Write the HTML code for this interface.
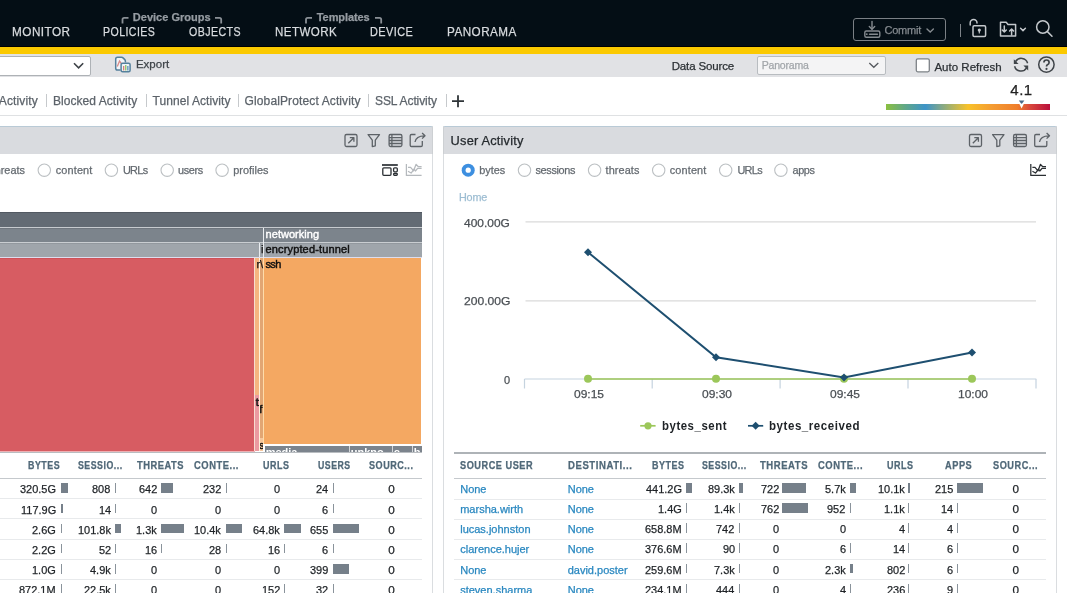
<!DOCTYPE html>
<html><head><meta charset="utf-8"><style>
html,body{margin:0;padding:0;}
body{width:1067px;height:593px;overflow:hidden;position:relative;background:#fff;font-family:"Liberation Sans",sans-serif;}
.t{position:absolute;white-space:nowrap;line-height:1;-webkit-text-stroke:0.25px currentColor;}
#w{position:absolute;left:0;top:0;width:1067px;height:593px;will-change:transform;}
.r{position:absolute;}
svg.r{overflow:visible;}
</style></head><body><div id="w">
<div class="r" style="left:0px;top:0px;width:1067px;height:46px;background:#040e15;"></div>
<div class="r" style="left:0px;top:46px;width:1067px;height:1px;background:#000;"></div>
<div class="r" style="left:0px;top:47px;width:1067px;height:7px;background:#fbc900;"></div>
<div class="t" style="left:12.10px;top:26.00px;font-size:12.6px;color:#d9dcdf;letter-spacing:0.500px;transform:scaleX(0.9338);transform-origin:0 0;">MONITOR</div>
<div class="t" style="left:103.40px;top:26.00px;font-size:12.6px;color:#d9dcdf;letter-spacing:0.500px;transform:scaleX(0.8411);transform-origin:0 0;">POLICIES</div>
<div class="t" style="left:189.40px;top:26.00px;font-size:12.6px;color:#d9dcdf;letter-spacing:0.500px;transform:scaleX(0.8431);transform-origin:0 0;">OBJECTS</div>
<div class="t" style="left:274.70px;top:26.00px;font-size:12.6px;color:#d9dcdf;letter-spacing:0.500px;transform:scaleX(0.9171);transform-origin:0 0;">NETWORK</div>
<div class="t" style="left:370.30px;top:26.00px;font-size:12.6px;color:#d9dcdf;letter-spacing:0.500px;transform:scaleX(0.8649);transform-origin:0 0;">DEVICE</div>
<div class="t" style="left:446.60px;top:26.00px;font-size:12.6px;color:#d9dcdf;letter-spacing:0.500px;transform:scaleX(0.9292);transform-origin:0 0;">PANORAMA</div>
<div class="t" style="left:132.80px;top:12.00px;font-size:11px;color:#969ca2;font-weight:bold;letter-spacing:0.012px;">Device Groups</div>
<div class="t" style="left:316.80px;top:12.00px;font-size:11px;color:#969ca2;font-weight:bold;letter-spacing:-0.084px;">Templates</div>
<svg class="r" style="left:0;top:0" width="1067" height="46"><g fill="none" stroke="#8a9096" stroke-width="1.8"><path d="M122.5 23.5 V19.5 Q122.5 17.8 124.2 17.8 H128.5"/><path d="M215 17.8 H219.5 Q221.2 17.8 221.2 19.5 V23.5"/><path d="M306 23.5 V19.5 Q306 17.8 307.7 17.8 H312"/><path d="M375 17.8 H379.5 Q381.2 17.8 381.2 19.5 V23.5"/></g></svg>
<div class="r" style="left:853px;top:18px;width:90.5px;height:20.5px;border:1.5px solid #7b8085;border-radius:3px;"></div>
<svg class="r" style="left:0;top:0" width="1067" height="46"><g fill="none" stroke="#868b90" stroke-width="1.4" stroke-linecap="round"><path d="M872 21.5 V29"/><path d="M869.3 26.5 L872 29.2 L874.7 26.5"/><rect x="864.8" y="31" width="15" height="6.3" rx="1.5"/><path d="M869.5 34.2 H877.5"/><path d="M927 29 L930.2 32 L933.4 29"/></g><circle cx="866.8" cy="34.2" r="0.9" fill="#868b90"/></svg>
<div class="t" style="left:884.40px;top:25.00px;font-size:11px;color:#868b90;letter-spacing:-0.170px;">Commit</div>
<div class="r" style="left:959.5px;top:23.5px;width:1.5px;height:13px;background:#7e8388;"></div>
<svg class="r" style="left:0;top:0" width="1067" height="46"><g fill="none" stroke="#c4c8cc" stroke-width="1.5" stroke-linecap="round" stroke-linejoin="round"><path d="M970.2 25 V23 A3.4 3.4 0 0 1 977 23"/><rect x="973" y="25.8" width="12.6" height="10.6" rx="1.2"/><path d="M1000.5 36 V22.3 H1006.2 L1008 24.4 H1015.6 V36 Z"/><path d="M1004.3 26 V32 M1002.3 30 L1004.3 32 L1006.3 30"/><path d="M1011.6 35 V29 M1009.6 31 L1011.6 29 L1013.6 31"/><path d="M1020.6 28.3 L1023 30.6 L1025.4 28.3"/><circle cx="1042.8" cy="27" r="6.2"/><path d="M1047.4 31.6 L1052 36.2"/></g><circle cx="979.3" cy="30" r="1.6" fill="#c4c8cc"/><path d="M978.5 30 H980.1 L979.8 33.5 H978.8Z" fill="#c4c8cc"/></svg>
<div class="r" style="left:0px;top:54px;width:1067px;height:23px;background:#e1e2e5;"></div>
<div class="r" style="left:-10px;top:55.5px;width:99px;height:18.5px;background:#fff;border:1px solid #aeb2b6;border-radius:2px;"></div>
<svg class="r" style="left:0;top:0" width="200" height="80"><path d="M74 63.3 L78.6 67.9 L83.2 63.3" fill="none" stroke="#3d4247" stroke-width="1.6"/></svg>
<svg class="r" style="left:0;top:0" width="200" height="80"><path d="M117.5 57.3 H121.5 L125.4 61.2 V70 H117.5 Q115.7 70 115.7 68.2 V59.1 Z" fill="#f2f5f8"/><path d="M117.5 57.3 H121.5 Q122.5 57.3 123.3 58.1 L124.8 59.6 Q125.4 60.2 125.4 61.2 V62.5 M120.6 70 H117.5 Q115.7 70 115.7 68.2 V59.1 Q115.7 57.3 117.5 57.3" fill="none" stroke="#55809c" stroke-width="1.5"/><path d="M117.3 66.5 L119.5 61 L121.3 63.5" fill="none" stroke="#d98a88" stroke-width="1.3"/><rect x="121.1" y="63.2" width="9" height="8.6" rx="1.5" fill="#eef4f8" stroke="#55809c" stroke-width="1.5"/><rect x="123" y="66" width="1.3" height="4.5" fill="#d9817a"/><rect x="125.1" y="65" width="1.3" height="5.5" fill="#93c262"/><rect x="127.2" y="66" width="1.3" height="4.5" fill="#5d94bb"/></svg>
<div class="t" style="left:135.90px;top:59.00px;font-size:11.5px;color:#3e4449;letter-spacing:0.013px;">Export</div>
<div class="t" style="left:671.70px;top:61.00px;font-size:11.5px;color:#2c3135;letter-spacing:-0.144px;">Data Source</div>
<div class="r" style="left:756.5px;top:56.3px;width:127.5px;height:16.5px;background:#f4f4f5;border:1px solid #b8bcc0;border-radius:2px;"></div>
<div class="t" style="left:761.70px;top:60.00px;font-size:10.5px;color:#a2a6aa;letter-spacing:-0.187px;">Panorama</div>
<svg class="r" style="left:0;top:0" width="1067" height="80"><g fill="none" stroke="#55595e" stroke-width="1.3"><path d="M869.3 63 L873.8 67.3 L878.3 63"/></g><rect x="916.3" y="58.8" width="13" height="13" rx="1.5" fill="#fff" stroke="#7d8287" stroke-width="1.3"/><g fill="none" stroke="#3f4449" stroke-width="1.5" stroke-linecap="butt"><path d="M1027.6 63.2 A6.6 6.6 0 0 0 1015.6 61.5"/><path d="M1014.6 66.2 A6.6 6.6 0 0 0 1026.6 67.9"/><circle cx="1046.4" cy="64.6" r="7.7"/></g></svg>
<svg class="r" style="left:0;top:0" width="1067" height="80"><g fill="#3f4449"><path d="M1013.8 59.2 L1013.8 63.9 L1018.6 63.9 Z"/><path d="M1028.2 65.6 L1028.2 70.6 L1023.4 65.6 Z"/></g><path d="M1043.9 62.6 Q1043.9 60 1046.5 60 Q1049.1 60 1049.1 62.4 Q1049.1 63.9 1047.4 64.8 Q1046.5 65.3 1046.5 66.6" fill="none" stroke="#3f4449" stroke-width="1.7"/><circle cx="1046.5" cy="68.9" r="1.05" fill="#3f4449"/></svg>
<div class="t" style="left:934.40px;top:62.00px;font-size:11.5px;color:#2c3135;letter-spacing:0.013px;">Auto Refresh</div>
<div class="t" style="left:-1.20px;top:95.00px;font-size:12px;color:#5c636a;letter-spacing:0.137px;">Activity</div>
<div class="t" style="left:52.90px;top:95.00px;font-size:12px;color:#5c636a;letter-spacing:0.060px;">Blocked Activity</div>
<div class="t" style="left:152.50px;top:95.00px;font-size:12px;color:#5c636a;letter-spacing:0.077px;">Tunnel Activity</div>
<div class="t" style="left:244.60px;top:95.00px;font-size:12px;color:#5c636a;letter-spacing:0.119px;">GlobalProtect Activity</div>
<div class="t" style="left:375.00px;top:95.00px;font-size:12px;color:#5c636a;letter-spacing:-0.089px;">SSL Activity</div>
<div class="r" style="left:46px;top:94px;width:1px;height:13px;background:#c6c9cc;"></div>
<div class="r" style="left:145.7px;top:94px;width:1px;height:13px;background:#c6c9cc;"></div>
<div class="r" style="left:238px;top:94px;width:1px;height:13px;background:#c6c9cc;"></div>
<div class="r" style="left:368.3px;top:94px;width:1px;height:13px;background:#c6c9cc;"></div>
<div class="r" style="left:445.5px;top:94px;width:1px;height:13px;background:#c6c9cc;"></div>
<svg class="r" style="left:0;top:0" width="500" height="120"><path d="M452 101.2 H464 M458 95.2 V107.2" stroke="#2f3438" stroke-width="1.8" fill="none"/></svg>
<div class="t" style="left:1010.30px;top:82.00px;font-size:15px;color:#222;letter-spacing:0.525px;">4.1</div>
<div class="r" style="left:886px;top:103.8px;width:164px;height:6px;background:linear-gradient(to right,#8bc040 0%,#5fa78a 12%,#3d94c8 24%,#9fb070 38%,#f8c22a 50%,#f49b32 65%,#ef7e2b 80%,#d8473c 88%,#b90f3c 100%);"></div>
<svg class="r" style="left:0;top:0" width="1067" height="120"><path d="M1018.8 100.6 H1024.4 L1021.6 104.2 Z" fill="#4a6a88"/><path d="M1019.3 103.8 H1023.9 L1021.6 108.6 Z" fill="#fff"/></svg>
<div class="r" style="left:0px;top:114.5px;width:1067px;height:1px;background:#dfe1e3;"></div>
<div class="r" style="left:-10px;top:126px;width:441px;height:480px;background:#fff;border-right:1px solid #dadde0;border-left:1px solid #dadde0;"></div>
<div class="r" style="left:-10px;top:126px;width:443px;height:27.5px;background:#d9dbdf;border-top:1px solid #b9cad6;border-left:1px solid #cdd0d3;border-right:1px solid #cdd0d3;border-radius:2px 2px 0 0;box-sizing:border-box"></div>
<div class="r" style="left:443px;top:126px;width:612px;height:480px;background:#fff;border-right:1px solid #dadde0;border-left:1px solid #dadde0;"></div>
<div class="r" style="left:443px;top:126px;width:614px;height:27.5px;background:#d9dbdf;border-top:1px solid #b9cad6;border-left:1px solid #cdd0d3;border-right:1px solid #cdd0d3;border-radius:2px 2px 0 0;box-sizing:border-box"></div>
<svg class="r" style="left:0;top:0" width="1067" height="160"><g transform="translate(-624.50,0)" fill="none" stroke="#5d6267" stroke-width="1.3" stroke-linejoin="round"><rect x="969.5" y="134.5" width="12" height="12" rx="1.5"/><path d="M972.8 143.2 L978.3 137.7 M974.3 137.6 H978.4 V141.7"/><path d="M992.6 134.6 H1004 L999.8 140.2 V145.8 L996.8 146.6 V140.2 Z"/><rect x="1013.6" y="134.5" width="12.8" height="12" rx="1.5"/><path d="M1013.6 137.6 H1026.4 M1013.6 140.5 H1026.4 M1013.6 143.5 H1026.4 M1016.4 134.5 V146.5"/><path d="M1040 134.5 H1036 Q1034.7 134.5 1034.7 135.8 V145.2 Q1034.7 146.5 1036 146.5 H1045.5 Q1046.8 146.5 1046.8 145.2 V141"/><path d="M1039.5 142 Q1040.5 135.8 1049 135.8 M1046.6 133 L1049.5 135.8 L1046.6 138.6"/></g></svg>
<svg class="r" style="left:0;top:0" width="1067" height="160"><g transform="translate(0.00,0)" fill="none" stroke="#5d6267" stroke-width="1.3" stroke-linejoin="round"><rect x="969.5" y="134.5" width="12" height="12" rx="1.5"/><path d="M972.8 143.2 L978.3 137.7 M974.3 137.6 H978.4 V141.7"/><path d="M992.6 134.6 H1004 L999.8 140.2 V145.8 L996.8 146.6 V140.2 Z"/><rect x="1013.6" y="134.5" width="12.8" height="12" rx="1.5"/><path d="M1013.6 137.6 H1026.4 M1013.6 140.5 H1026.4 M1013.6 143.5 H1026.4 M1016.4 134.5 V146.5"/><path d="M1040 134.5 H1036 Q1034.7 134.5 1034.7 135.8 V145.2 Q1034.7 146.5 1036 146.5 H1045.5 Q1046.8 146.5 1046.8 145.2 V141"/><path d="M1039.5 142 Q1040.5 135.8 1049 135.8 M1046.6 133 L1049.5 135.8 L1046.6 138.6"/></g></svg>
<div class="t" style="left:450.60px;top:135.00px;font-size:12.8px;color:#24292d;letter-spacing:0.200px;">User Activity</div>
<div class="t" style="left:-8.35px;top:165.00px;font-size:10.9px;color:#646a70;">threats</div>
<svg class="r" style="left:0;top:0" width="1067" height="200"><circle cx="44.3" cy="170.2" r="6.2" fill="#fff" stroke="#bcc0c3" stroke-width="1.1"/></svg>
<div class="t" style="left:55.70px;top:165.00px;font-size:10.9px;color:#646a70;letter-spacing:0.158px;">content</div>
<svg class="r" style="left:0;top:0" width="1067" height="200"><circle cx="111.39999999999999" cy="170.2" r="6.2" fill="#fff" stroke="#bcc0c3" stroke-width="1.1"/></svg>
<div class="t" style="left:122.90px;top:165.00px;font-size:10.9px;color:#646a70;letter-spacing:-0.683px;">URLs</div>
<svg class="r" style="left:0;top:0" width="1067" height="200"><circle cx="167.20000000000002" cy="170.2" r="6.2" fill="#fff" stroke="#bcc0c3" stroke-width="1.1"/></svg>
<div class="t" style="left:178.00px;top:165.00px;font-size:10.9px;color:#646a70;letter-spacing:-0.351px;">users</div>
<svg class="r" style="left:0;top:0" width="1067" height="200"><circle cx="222.10000000000002" cy="170.2" r="6.2" fill="#fff" stroke="#bcc0c3" stroke-width="1.1"/></svg>
<div class="t" style="left:233.20px;top:165.00px;font-size:10.9px;color:#646a70;letter-spacing:0.029px;">profiles</div>
<svg class="r" style="left:0;top:0" width="1067" height="200"><circle cx="468.2" cy="170.2" r="6.5" fill="#3d8fe0"/><circle cx="468.2" cy="170.2" r="2.6" fill="#fff"/></svg>
<div class="t" style="left:479.20px;top:165.00px;font-size:10.9px;color:#646a70;letter-spacing:-0.013px;">bytes</div>
<svg class="r" style="left:0;top:0" width="1067" height="200"><circle cx="524.5" cy="170.2" r="6.2" fill="#fff" stroke="#bcc0c3" stroke-width="1.1"/></svg>
<div class="t" style="left:535.50px;top:165.00px;font-size:10.9px;color:#646a70;letter-spacing:-0.357px;">sessions</div>
<svg class="r" style="left:0;top:0" width="1067" height="200"><circle cx="594.5999999999999" cy="170.2" r="6.2" fill="#fff" stroke="#bcc0c3" stroke-width="1.1"/></svg>
<div class="t" style="left:605.60px;top:165.00px;font-size:10.9px;color:#646a70;letter-spacing:0.091px;">threats</div>
<svg class="r" style="left:0;top:0" width="1067" height="200"><circle cx="658.6999999999999" cy="170.2" r="6.2" fill="#fff" stroke="#bcc0c3" stroke-width="1.1"/></svg>
<div class="t" style="left:669.70px;top:165.00px;font-size:10.9px;color:#646a70;letter-spacing:0.158px;">content</div>
<svg class="r" style="left:0;top:0" width="1067" height="200"><circle cx="725.6999999999999" cy="170.2" r="6.2" fill="#fff" stroke="#bcc0c3" stroke-width="1.1"/></svg>
<div class="t" style="left:737.40px;top:165.00px;font-size:10.9px;color:#646a70;letter-spacing:-0.650px;">URLs</div>
<svg class="r" style="left:0;top:0" width="1067" height="200"><circle cx="780.9" cy="170.2" r="6.2" fill="#fff" stroke="#bcc0c3" stroke-width="1.1"/></svg>
<div class="t" style="left:792.60px;top:165.00px;font-size:10.9px;color:#646a70;letter-spacing:-0.418px;">apps</div>
<svg class="r" style="left:0;top:0" width="1067" height="200"><g transform="translate(0.00,0)" fill="none" stroke="#2a2e32" stroke-width="1.25" stroke-linejoin="round"><path d="M1030.8 164 V175.4 H1046"/><path d="M1032.4 167.3 H1035 L1038 170.8 L1040.5 164.3 L1042.5 166.5 H1046"/><path d="M1032.4 171.3 L1035.5 173 L1038.5 169 L1039.8 171 L1042 168.3 H1046"/></g></svg>
<svg class="r" style="left:0;top:0" width="1067" height="200"><g transform="translate(-624.40,0)" fill="none" stroke="#b5b9bd" stroke-width="1.25" stroke-linejoin="round"><path d="M1030.8 164 V175.4 H1046"/><path d="M1032.4 167.3 H1035 L1038 170.8 L1040.5 164.3 L1042.5 166.5 H1046"/><path d="M1032.4 171.3 L1035.5 173 L1038.5 169 L1039.8 171 L1042 168.3 H1046"/></g></svg>
<svg class="r" style="left:0;top:0" width="500" height="200"><g fill="none" stroke="#2a2f33" stroke-width="1.3"><path d="M382 165 H397.8" stroke-width="1.7"/><rect x="382.8" y="167.8" width="8.2" height="7.5" rx="1"/><rect x="393.6" y="167.8" width="3.7" height="4" rx="1"/><rect x="393.6" y="173.5" width="3.7" height="1.8" rx="0.8"/></g></svg>
<div class="r" style="left:0px;top:212px;width:421.5px;height:15px;background:#636b74;"></div>
<div class="r" style="left:0px;top:227px;width:421.5px;height:1px;background:#c7cbcf;"></div>
<div class="r" style="left:0px;top:228px;width:421.5px;height:14.2px;background:#7c848c;"></div>
<div class="r" style="left:0px;top:242.2px;width:421.5px;height:1.2px;background:#c9cdd1;"></div>
<div class="r" style="left:0px;top:243.4px;width:421.5px;height:13.9px;background:#9fa5ab;"></div>
<div class="r" style="left:0px;top:257.3px;width:421.5px;height:0.5px;background:#dde;"></div>
<div class="r" style="left:0px;top:257.8px;width:254.4px;height:193.2px;background:#d75c62;"></div>
<div class="r" style="left:0px;top:212px;width:421.5px;height:1px;background:#525962;"></div>
<div class="r" style="left:0px;top:228px;width:421.5px;height:0.8px;background:#6f767e;"></div>
<div class="r" style="left:0px;top:243.4px;width:421.5px;height:0.8px;background:#92989e;"></div>
<div class="r" style="left:0px;top:257.8px;width:254.4px;height:0.8px;background:#cd5158;"></div>
<div class="r" style="left:0px;top:451px;width:254.6px;height:1px;background:#eeb0b3;"></div>
<div class="r" style="left:0px;top:452px;width:421.7px;height:1px;background:#b9bdc1;"></div>
<div class="r" style="left:254.4px;top:257.8px;width:167.1px;height:186.2px;background:#f4a862;"></div>
<div class="r" style="left:264.5px;top:446.2px;width:157px;height:5.8px;background:#7c848d;"></div>
<div class="r" style="left:264.5px;top:444px;width:157px;height:2.2px;background:#fff;"></div>
<div class="r" style="left:254.4px;top:257.8px;width:1px;height:193.2px;background:#f8dcd0;"></div>
<div class="r" style="left:255.4px;top:257.8px;width:3.2px;height:137.2px;background:#f5b580;"></div>
<div class="r" style="left:255.4px;top:395px;width:3.2px;height:56px;background:#eb9aa0;"></div>
<div class="r" style="left:258.6px;top:257.8px;width:1px;height:193.2px;background:#fff3dc;"></div>
<div class="r" style="left:259.6px;top:257.8px;width:3.2px;height:180.2px;background:#e2a673;"></div>
<div class="r" style="left:259.6px;top:438px;width:3.4px;height:13px;background:#f6c79c;"></div>
<div class="r" style="left:262.8px;top:257.8px;width:1.7px;height:186.2px;background:#fedcaa;"></div>
<div class="r" style="left:255.4px;top:395px;width:3.2px;height:56px;overflow:hidden"><div class="t" style="left:0.3px;top:2px;font-size:11px;color:#111;-webkit-text-stroke:0.5px #111">t</div></div>
<div class="r" style="left:259.6px;top:400px;width:3.2px;height:38px;overflow:hidden"><div class="t" style="left:-0.3px;top:3.5px;font-size:11px;color:#111;-webkit-text-stroke:0.5px #111">f</div></div>
<div class="r" style="left:259.6px;top:438px;width:3.4px;height:13px;overflow:hidden"><div class="t" style="left:-0.5px;top:2px;font-size:11px;color:#111;-webkit-text-stroke:0.5px #111">s</div></div>
<div class="r" style="left:263.3px;top:228px;width:1px;height:29.5px;background:#e9ecef;"></div>
<div class="r" style="left:258.8px;top:243.4px;width:1px;height:14px;background:#e9ecef;"></div>
<div class="r" style="left:349.1px;top:446px;width:1px;height:6px;background:#d3d6d9;"></div>
<div class="r" style="left:392.4px;top:446px;width:1px;height:6px;background:#d3d6d9;"></div>
<div class="r" style="left:412.1px;top:446px;width:1px;height:6px;background:#d3d6d9;"></div>
<div class="r" style="left:263.7px;top:446.2px;width:157.8px;height:5.8px;overflow:hidden"><div class="t" style="left:2px;top:1px;font-size:11px;color:#fff;font-weight:bold;-webkit-text-stroke:0">media</div><div class="t" style="left:87px;top:1px;font-size:11px;color:#fff;font-weight:bold;-webkit-text-stroke:0">unkno</div><div class="t" style="left:130px;top:1px;font-size:11px;color:#fff;font-weight:bold;-webkit-text-stroke:0">c</div><div class="t" style="left:150px;top:1px;font-size:11px;color:#fff;font-weight:bold;-webkit-text-stroke:0">b</div></div>
<div class="t" style="left:265.60px;top:229.00px;font-size:11px;color:#ffffff;letter-spacing:0.029px;-webkit-text-stroke:0.4px #fff;">networking</div>
<div class="t" style="left:261.00px;top:244.00px;font-size:11px;color:#111;">i</div>
<div class="t" style="left:265.60px;top:244.00px;font-size:11px;color:#111;letter-spacing:0.137px;-webkit-text-stroke:0.45px #111;">encrypted-tunnel</div>
<div class="t" style="left:256.40px;top:259.00px;font-size:11px;color:#111;">r\</div>
<div class="t" style="left:265.40px;top:259.00px;font-size:11px;color:#111;letter-spacing:-0.580px;-webkit-text-stroke:0.45px #111;">ssh</div>
<svg class="r" style="left:0;top:0" width="1067" height="593"><g stroke="#dadada" stroke-width="1.2"><path d="M525.5 221.8 H1036"/><path d="M525.5 300.8 H1036"/></g><g stroke="#c5d3df" stroke-width="1.2" fill="none"><path d="M524.5 379 H1036.3"/><path d="M524.5 379 V388.5 M652.2 379 V388.5 M780.1 379 V388.5 M908 379 V388.5 M1036 379 V388.5"/></g><path d="M588 379 H972" stroke="#9cc75a" stroke-width="1.6"/><g fill="#9cc75a"><circle cx="588" cy="378.8" r="4"/><circle cx="716" cy="378.8" r="4"/><circle cx="844" cy="378.8" r="4"/><circle cx="972" cy="378.8" r="4"/></g><path d="M588 252.2 L716 357.2 L844 377.4 L972 352.4" fill="none" stroke="#1e4f70" stroke-width="2"/><g fill="#1e4f70"><path d="M588 248.2 L592 252.2 L588 256.2 L584 252.2 Z"/><path d="M716 353.2 L720 357.2 L716 361.2 L712 357.2 Z"/><path d="M844 373.4 L848 377.4 L844 381.4 L840 377.4 Z"/><path d="M972 348.4 L976 352.4 L972 356.4 L968 352.4 Z"/></g><path d="M640.2 425.8 H655.6" stroke="#9cc75a" stroke-width="1.7"/><circle cx="648" cy="425.8" r="3.6" fill="#9cc75a"/><path d="M748 425.8 H763.2" stroke="#1e4f70" stroke-width="1.7"/><path d="M755.6 421.8 L759.6 425.8 L755.6 429.8 L751.6 425.8Z" fill="#1e4f70"/></svg>
<div class="t" style="left:464.10px;top:218.00px;font-size:11.8px;color:#4a4f54;transform:scaleX(1.0130);transform-origin:0 0;">400.00G</div>
<div class="t" style="left:463.50px;top:296.00px;font-size:11.8px;color:#4a4f54;transform:scaleX(1.0262);transform-origin:0 0;">200.00G</div>
<div class="t" style="left:503.55px;top:375.00px;font-size:11.8px;color:#4a4f54;transform:scaleX(0.9300);transform-origin:0 0;">0</div>
<div class="t" style="left:574.00px;top:389.00px;font-size:11.5px;color:#4a4f54;transform:scaleX(1.0435);transform-origin:0 0;">09:15</div>
<div class="t" style="left:702.00px;top:389.00px;font-size:11.5px;color:#4a4f54;transform:scaleX(1.0435);transform-origin:0 0;">09:30</div>
<div class="t" style="left:830.00px;top:389.00px;font-size:11.5px;color:#4a4f54;transform:scaleX(1.0435);transform-origin:0 0;">09:45</div>
<div class="t" style="left:958.00px;top:389.00px;font-size:11.5px;color:#4a4f54;transform:scaleX(1.0435);transform-origin:0 0;">10:00</div>
<div class="t" style="left:661.60px;top:420.00px;font-size:12.5px;color:#1e2226;font-weight:bold;letter-spacing:0.600px;transform:scaleX(0.9115);transform-origin:0 0;-webkit-text-stroke:0;">bytes_sent</div>
<div class="t" style="left:768.80px;top:420.00px;font-size:12.5px;color:#1e2226;font-weight:bold;letter-spacing:0.600px;transform:scaleX(0.9218);transform-origin:0 0;-webkit-text-stroke:0;">bytes_received</div>
<div class="t" style="left:458.90px;top:192.00px;font-size:10.8px;color:#9dbdd2;letter-spacing:-0.112px;">Home</div>
<div class="r" style="left:0px;top:478px;width:421.7px;height:1px;background:#c5c9cd;"></div>
<div class="r" style="left:0px;top:498.3px;width:421.7px;height:1px;background:#e8eaec;"></div>
<div class="r" style="left:0px;top:518.3px;width:421.7px;height:1px;background:#e8eaec;"></div>
<div class="r" style="left:0px;top:538.6px;width:421.7px;height:1px;background:#e8eaec;"></div>
<div class="r" style="left:0px;top:558.9px;width:421.7px;height:1px;background:#e8eaec;"></div>
<div class="r" style="left:0px;top:579.1px;width:421.7px;height:1px;background:#e8eaec;"></div>
<div class="t" style="left:27.80px;top:461.00px;font-size:10.3px;color:#506878;font-weight:bold;letter-spacing:0.600px;transform:scaleX(0.8611);transform-origin:0 0;">BYTES</div>
<div class="t" style="left:77.90px;top:461.00px;font-size:10.3px;color:#506878;font-weight:bold;letter-spacing:0.600px;transform:scaleX(0.8519);transform-origin:0 0;">SESSIO...</div>
<div class="t" style="left:136.50px;top:461.00px;font-size:10.3px;color:#506878;font-weight:bold;letter-spacing:0.600px;transform:scaleX(0.9049);transform-origin:0 0;">THREATS</div>
<div class="t" style="left:194.10px;top:461.00px;font-size:10.3px;color:#506878;font-weight:bold;letter-spacing:0.600px;transform:scaleX(0.9099);transform-origin:0 0;">CONTE...</div>
<div class="t" style="left:263.30px;top:461.00px;font-size:10.3px;color:#506878;font-weight:bold;letter-spacing:0.600px;transform:scaleX(0.8687);transform-origin:0 0;">URLS</div>
<div class="t" style="left:318.40px;top:461.00px;font-size:10.3px;color:#506878;font-weight:bold;letter-spacing:0.600px;transform:scaleX(0.8488);transform-origin:0 0;">USERS</div>
<div class="t" style="left:368.80px;top:461.00px;font-size:10.3px;color:#506878;font-weight:bold;letter-spacing:0.600px;transform:scaleX(0.8792);transform-origin:0 0;">SOURC...</div>
<div class="t" style="left:20.11px;top:484.00px;font-size:11.8px;color:#1e2226;transform:scaleX(0.9300);transform-origin:0 0;">320.5G</div>
<div class="r" style="left:60.8px;top:483.3px;width:7px;height:9.6px;background:#76808a;"></div>
<div class="t" style="left:92.47px;top:484.00px;font-size:11.8px;color:#1e2226;transform:scaleX(0.9300);transform-origin:0 0;">808</div>
<div class="r" style="left:114.8px;top:483.3px;width:1.2px;height:9.6px;background:#8a939b;"></div>
<div class="t" style="left:138.77px;top:484.00px;font-size:11.8px;color:#1e2226;transform:scaleX(0.9300);transform-origin:0 0;">642</div>
<div class="r" style="left:161.2px;top:483.3px;width:12px;height:9.6px;background:#76808a;"></div>
<div class="t" style="left:203.07px;top:484.00px;font-size:11.8px;color:#1e2226;transform:scaleX(0.9300);transform-origin:0 0;">232</div>
<div class="r" style="left:225.5px;top:483.3px;width:1.2px;height:9.6px;background:#8a939b;"></div>
<div class="t" style="left:273.85px;top:484.00px;font-size:11.8px;color:#1e2226;transform:scaleX(0.9300);transform-origin:0 0;">0</div>
<div class="t" style="left:316.42px;top:484.00px;font-size:11.8px;color:#1e2226;transform:scaleX(0.9300);transform-origin:0 0;">24</div>
<div class="r" style="left:333px;top:483.3px;width:1.2px;height:9.6px;background:#8a939b;"></div>
<div class="t" style="left:388.22px;top:483.00px;font-size:11.7px;color:#1e2226;">0</div>
<div class="t" style="left:20.87px;top:505.00px;font-size:11.8px;color:#1e2226;transform:scaleX(0.9300);transform-origin:0 0;">117.9G</div>
<div class="r" style="left:60.8px;top:503.5px;width:2.4px;height:9.6px;background:#76808a;"></div>
<div class="t" style="left:98.62px;top:505.00px;font-size:11.8px;color:#1e2226;transform:scaleX(0.9300);transform-origin:0 0;">14</div>
<div class="r" style="left:114.8px;top:503.5px;width:1.2px;height:9.6px;background:#8a939b;"></div>
<div class="t" style="left:150.95px;top:505.00px;font-size:11.8px;color:#1e2226;transform:scaleX(0.9300);transform-origin:0 0;">0</div>
<div class="t" style="left:215.25px;top:505.00px;font-size:11.8px;color:#1e2226;transform:scaleX(0.9300);transform-origin:0 0;">0</div>
<div class="t" style="left:273.85px;top:505.00px;font-size:11.8px;color:#1e2226;transform:scaleX(0.9300);transform-origin:0 0;">0</div>
<div class="t" style="left:322.45px;top:505.00px;font-size:11.8px;color:#1e2226;transform:scaleX(0.9300);transform-origin:0 0;">6</div>
<div class="r" style="left:333px;top:503.5px;width:1.2px;height:9.6px;background:#8a939b;"></div>
<div class="t" style="left:388.22px;top:504.00px;font-size:11.7px;color:#1e2226;">0</div>
<div class="t" style="left:32.29px;top:525.00px;font-size:11.8px;color:#1e2226;transform:scaleX(0.9300);transform-origin:0 0;">2.6G</div>
<div class="r" style="left:60.8px;top:523.7px;width:1.2px;height:9.6px;background:#8a939b;"></div>
<div class="t" style="left:77.77px;top:525.00px;font-size:11.8px;color:#1e2226;transform:scaleX(0.9300);transform-origin:0 0;">101.8k</div>
<div class="r" style="left:114.8px;top:523.7px;width:6px;height:9.6px;background:#76808a;"></div>
<div class="t" style="left:136.25px;top:525.00px;font-size:11.8px;color:#1e2226;transform:scaleX(0.9300);transform-origin:0 0;">1.3k</div>
<div class="r" style="left:161.2px;top:523.7px;width:23px;height:9.6px;background:#76808a;"></div>
<div class="t" style="left:194.40px;top:525.00px;font-size:11.8px;color:#1e2226;transform:scaleX(0.9300);transform-origin:0 0;">10.4k</div>
<div class="r" style="left:225.5px;top:523.7px;width:16.5px;height:9.6px;background:#76808a;"></div>
<div class="t" style="left:253.00px;top:525.00px;font-size:11.8px;color:#1e2226;transform:scaleX(0.9300);transform-origin:0 0;">64.8k</div>
<div class="r" style="left:284px;top:523.7px;width:16.5px;height:9.6px;background:#76808a;"></div>
<div class="t" style="left:310.27px;top:525.00px;font-size:11.8px;color:#1e2226;transform:scaleX(0.9300);transform-origin:0 0;">655</div>
<div class="r" style="left:333px;top:523.7px;width:25.6px;height:9.6px;background:#76808a;"></div>
<div class="t" style="left:388.22px;top:524.00px;font-size:11.7px;color:#1e2226;">0</div>
<div class="t" style="left:32.29px;top:545.00px;font-size:11.8px;color:#1e2226;transform:scaleX(0.9300);transform-origin:0 0;">2.2G</div>
<div class="r" style="left:60.8px;top:543.9px;width:1.2px;height:9.6px;background:#8a939b;"></div>
<div class="t" style="left:98.62px;top:545.00px;font-size:11.8px;color:#1e2226;transform:scaleX(0.9300);transform-origin:0 0;">52</div>
<div class="r" style="left:114.8px;top:543.9px;width:1.2px;height:9.6px;background:#8a939b;"></div>
<div class="t" style="left:144.92px;top:545.00px;font-size:11.8px;color:#1e2226;transform:scaleX(0.9300);transform-origin:0 0;">16</div>
<div class="r" style="left:161.2px;top:543.9px;width:1.2px;height:9.6px;background:#8a939b;"></div>
<div class="t" style="left:209.22px;top:545.00px;font-size:11.8px;color:#1e2226;transform:scaleX(0.9300);transform-origin:0 0;">28</div>
<div class="r" style="left:225.5px;top:543.9px;width:1.2px;height:9.6px;background:#8a939b;"></div>
<div class="t" style="left:267.82px;top:545.00px;font-size:11.8px;color:#1e2226;transform:scaleX(0.9300);transform-origin:0 0;">16</div>
<div class="r" style="left:284px;top:543.9px;width:1.2px;height:9.6px;background:#8a939b;"></div>
<div class="t" style="left:322.45px;top:545.00px;font-size:11.8px;color:#1e2226;transform:scaleX(0.9300);transform-origin:0 0;">6</div>
<div class="r" style="left:333px;top:543.9px;width:1.2px;height:9.6px;background:#8a939b;"></div>
<div class="t" style="left:388.22px;top:544.00px;font-size:11.7px;color:#1e2226;">0</div>
<div class="t" style="left:32.29px;top:565.00px;font-size:11.8px;color:#1e2226;transform:scaleX(0.9300);transform-origin:0 0;">1.0G</div>
<div class="r" style="left:60.8px;top:564.1px;width:1.2px;height:9.6px;background:#8a939b;"></div>
<div class="t" style="left:89.95px;top:565.00px;font-size:11.8px;color:#1e2226;transform:scaleX(0.9300);transform-origin:0 0;">4.9k</div>
<div class="r" style="left:114.8px;top:564.1px;width:1.2px;height:9.6px;background:#8a939b;"></div>
<div class="t" style="left:150.95px;top:565.00px;font-size:11.8px;color:#1e2226;transform:scaleX(0.9300);transform-origin:0 0;">0</div>
<div class="t" style="left:215.25px;top:565.00px;font-size:11.8px;color:#1e2226;transform:scaleX(0.9300);transform-origin:0 0;">0</div>
<div class="t" style="left:273.85px;top:565.00px;font-size:11.8px;color:#1e2226;transform:scaleX(0.9300);transform-origin:0 0;">0</div>
<div class="t" style="left:310.27px;top:565.00px;font-size:11.8px;color:#1e2226;transform:scaleX(0.9300);transform-origin:0 0;">399</div>
<div class="r" style="left:333px;top:564.1px;width:15.6px;height:9.6px;background:#76808a;"></div>
<div class="t" style="left:388.22px;top:564.00px;font-size:11.7px;color:#1e2226;">0</div>
<div class="t" style="left:19.45px;top:585.00px;font-size:11.8px;color:#1e2226;transform:scaleX(0.9300);transform-origin:0 0;">872.1M</div>
<div class="r" style="left:60.8px;top:584.3px;width:1.2px;height:9.6px;background:#8a939b;"></div>
<div class="t" style="left:83.80px;top:585.00px;font-size:11.8px;color:#1e2226;transform:scaleX(0.9300);transform-origin:0 0;">22.5k</div>
<div class="r" style="left:114.8px;top:584.3px;width:1.2px;height:9.6px;background:#8a939b;"></div>
<div class="t" style="left:150.95px;top:585.00px;font-size:11.8px;color:#1e2226;transform:scaleX(0.9300);transform-origin:0 0;">0</div>
<div class="t" style="left:215.25px;top:585.00px;font-size:11.8px;color:#1e2226;transform:scaleX(0.9300);transform-origin:0 0;">0</div>
<div class="t" style="left:261.67px;top:585.00px;font-size:11.8px;color:#1e2226;transform:scaleX(0.9300);transform-origin:0 0;">152</div>
<div class="r" style="left:284px;top:584.3px;width:1.2px;height:9.6px;background:#8a939b;"></div>
<div class="t" style="left:316.42px;top:585.00px;font-size:11.8px;color:#1e2226;transform:scaleX(0.9300);transform-origin:0 0;">32</div>
<div class="r" style="left:333px;top:584.3px;width:1.2px;height:9.6px;background:#8a939b;"></div>
<div class="t" style="left:388.22px;top:584.00px;font-size:11.7px;color:#1e2226;">0</div>
<div class="r" style="left:453.5px;top:451.8px;width:592.5px;height:1.8px;background:#aeb3b7;"></div>
<div class="r" style="left:453.5px;top:478px;width:592.5px;height:1px;background:#c5c9cd;"></div>
<div class="r" style="left:453.5px;top:498.5px;width:592.5px;height:1px;background:#e8eaec;"></div>
<div class="r" style="left:453.5px;top:518.5px;width:592.5px;height:1px;background:#e8eaec;"></div>
<div class="r" style="left:453.5px;top:538.8px;width:592.5px;height:1px;background:#e8eaec;"></div>
<div class="r" style="left:453.5px;top:559.1px;width:592.5px;height:1px;background:#e8eaec;"></div>
<div class="r" style="left:453.5px;top:579.2px;width:592.5px;height:1px;background:#e8eaec;"></div>
<div class="t" style="left:460.20px;top:461.00px;font-size:10.3px;color:#506878;font-weight:bold;letter-spacing:0.600px;transform:scaleX(0.8908);transform-origin:0 0;">SOURCE USER</div>
<div class="t" style="left:567.70px;top:461.00px;font-size:10.3px;color:#506878;font-weight:bold;letter-spacing:0.600px;transform:scaleX(0.9286);transform-origin:0 0;">DESTINATI...</div>
<div class="t" style="left:651.90px;top:461.00px;font-size:10.3px;color:#506878;font-weight:bold;letter-spacing:0.600px;transform:scaleX(0.8720);transform-origin:0 0;">BYTES</div>
<div class="t" style="left:702.20px;top:461.00px;font-size:10.3px;color:#506878;font-weight:bold;letter-spacing:0.600px;transform:scaleX(0.8519);transform-origin:0 0;">SESSIO...</div>
<div class="t" style="left:759.90px;top:461.00px;font-size:10.3px;color:#506878;font-weight:bold;letter-spacing:0.600px;transform:scaleX(0.9224);transform-origin:0 0;">THREATS</div>
<div class="t" style="left:818.10px;top:461.00px;font-size:10.3px;color:#506878;font-weight:bold;letter-spacing:0.600px;transform:scaleX(0.9119);transform-origin:0 0;">CONTE...</div>
<div class="t" style="left:887.10px;top:461.00px;font-size:10.3px;color:#506878;font-weight:bold;letter-spacing:0.600px;transform:scaleX(0.8754);transform-origin:0 0;">URLS</div>
<div class="t" style="left:945.30px;top:461.00px;font-size:10.3px;color:#506878;font-weight:bold;letter-spacing:0.600px;transform:scaleX(0.8955);transform-origin:0 0;">APPS</div>
<div class="t" style="left:992.80px;top:461.00px;font-size:10.3px;color:#506878;font-weight:bold;letter-spacing:0.600px;transform:scaleX(0.8912);transform-origin:0 0;">SOURC...</div>
<div class="t" style="left:460.20px;top:484.00px;font-size:11px;color:#2a88c0;">None</div>
<div class="t" style="left:567.70px;top:484.00px;font-size:11px;color:#2a88c0;">None</div>
<div class="t" style="left:645.51px;top:484.00px;font-size:11.8px;color:#1e2226;transform:scaleX(0.9300);transform-origin:0 0;">441.2G</div>
<div class="r" style="left:686px;top:483.0px;width:5.8px;height:9.6px;background:#76808a;"></div>
<div class="t" style="left:707.70px;top:484.00px;font-size:11.8px;color:#1e2226;transform:scaleX(0.9300);transform-origin:0 0;">89.3k</div>
<div class="r" style="left:739px;top:483.0px;width:4px;height:9.6px;background:#76808a;"></div>
<div class="t" style="left:760.87px;top:484.00px;font-size:11.8px;color:#1e2226;transform:scaleX(0.9300);transform-origin:0 0;">722</div>
<div class="r" style="left:782.3px;top:483.0px;width:23.6px;height:9.6px;background:#76808a;"></div>
<div class="t" style="left:824.85px;top:484.00px;font-size:11.8px;color:#1e2226;transform:scaleX(0.9300);transform-origin:0 0;">5.7k</div>
<div class="r" style="left:849.7px;top:483.0px;width:6.8px;height:9.6px;background:#76808a;"></div>
<div class="t" style="left:877.90px;top:484.00px;font-size:11.8px;color:#1e2226;transform:scaleX(0.9300);transform-origin:0 0;">10.1k</div>
<div class="r" style="left:908px;top:483.0px;width:2.4px;height:9.6px;background:#76808a;"></div>
<div class="t" style="left:935.27px;top:484.00px;font-size:11.8px;color:#1e2226;transform:scaleX(0.9300);transform-origin:0 0;">215</div>
<div class="r" style="left:957px;top:483.0px;width:25.7px;height:9.6px;background:#76808a;"></div>
<div class="t" style="left:1012.52px;top:483.00px;font-size:11.7px;color:#1e2226;">0</div>
<div class="t" style="left:460.20px;top:504.00px;font-size:11px;color:#2a88c0;">marsha.wirth</div>
<div class="t" style="left:567.70px;top:504.00px;font-size:11px;color:#2a88c0;">None</div>
<div class="t" style="left:657.69px;top:504.00px;font-size:11.8px;color:#1e2226;transform:scaleX(0.9300);transform-origin:0 0;">1.4G</div>
<div class="r" style="left:686px;top:503.15px;width:1.2px;height:9.6px;background:#8a939b;"></div>
<div class="t" style="left:713.85px;top:504.00px;font-size:11.8px;color:#1e2226;transform:scaleX(0.9300);transform-origin:0 0;">1.4k</div>
<div class="r" style="left:739px;top:503.15px;width:1.2px;height:9.6px;background:#8a939b;"></div>
<div class="t" style="left:760.87px;top:504.00px;font-size:11.8px;color:#1e2226;transform:scaleX(0.9300);transform-origin:0 0;">762</div>
<div class="r" style="left:782.3px;top:503.15px;width:25.7px;height:9.6px;background:#76808a;"></div>
<div class="t" style="left:827.37px;top:504.00px;font-size:11.8px;color:#1e2226;transform:scaleX(0.9300);transform-origin:0 0;">952</div>
<div class="r" style="left:849.7px;top:503.15px;width:1.2px;height:9.6px;background:#8a939b;"></div>
<div class="t" style="left:884.05px;top:504.00px;font-size:11.8px;color:#1e2226;transform:scaleX(0.9300);transform-origin:0 0;">1.1k</div>
<div class="r" style="left:908px;top:503.15px;width:1.2px;height:9.6px;background:#8a939b;"></div>
<div class="t" style="left:941.42px;top:504.00px;font-size:11.8px;color:#1e2226;transform:scaleX(0.9300);transform-origin:0 0;">14</div>
<div class="r" style="left:957px;top:503.15px;width:1.2px;height:9.6px;background:#8a939b;"></div>
<div class="t" style="left:1012.52px;top:503.00px;font-size:11.7px;color:#1e2226;">0</div>
<div class="t" style="left:460.20px;top:524.00px;font-size:11px;color:#2a88c0;">lucas.johnston</div>
<div class="t" style="left:567.70px;top:524.00px;font-size:11px;color:#2a88c0;">None</div>
<div class="t" style="left:644.85px;top:524.00px;font-size:11.8px;color:#1e2226;transform:scaleX(0.9300);transform-origin:0 0;">658.8M</div>
<div class="r" style="left:686px;top:523.3px;width:1.2px;height:9.6px;background:#8a939b;"></div>
<div class="t" style="left:716.37px;top:524.00px;font-size:11.8px;color:#1e2226;transform:scaleX(0.9300);transform-origin:0 0;">742</div>
<div class="r" style="left:739px;top:523.3px;width:1.2px;height:9.6px;background:#8a939b;"></div>
<div class="t" style="left:773.05px;top:524.00px;font-size:11.8px;color:#1e2226;transform:scaleX(0.9300);transform-origin:0 0;">0</div>
<div class="t" style="left:839.55px;top:524.00px;font-size:11.8px;color:#1e2226;transform:scaleX(0.9300);transform-origin:0 0;">0</div>
<div class="t" style="left:898.75px;top:524.00px;font-size:11.8px;color:#1e2226;transform:scaleX(0.9300);transform-origin:0 0;">4</div>
<div class="r" style="left:908px;top:523.3px;width:1.2px;height:9.6px;background:#8a939b;"></div>
<div class="t" style="left:947.45px;top:524.00px;font-size:11.8px;color:#1e2226;transform:scaleX(0.9300);transform-origin:0 0;">4</div>
<div class="r" style="left:957px;top:523.3px;width:1.2px;height:9.6px;background:#8a939b;"></div>
<div class="t" style="left:1012.52px;top:523.00px;font-size:11.7px;color:#1e2226;">0</div>
<div class="t" style="left:460.20px;top:544.00px;font-size:11px;color:#2a88c0;">clarence.hujer</div>
<div class="t" style="left:567.70px;top:544.00px;font-size:11px;color:#2a88c0;">None</div>
<div class="t" style="left:644.85px;top:544.00px;font-size:11.8px;color:#1e2226;transform:scaleX(0.9300);transform-origin:0 0;">376.6M</div>
<div class="r" style="left:686px;top:543.45px;width:1.2px;height:9.6px;background:#8a939b;"></div>
<div class="t" style="left:722.52px;top:544.00px;font-size:11.8px;color:#1e2226;transform:scaleX(0.9300);transform-origin:0 0;">90</div>
<div class="r" style="left:739px;top:543.45px;width:1.2px;height:9.6px;background:#8a939b;"></div>
<div class="t" style="left:773.05px;top:544.00px;font-size:11.8px;color:#1e2226;transform:scaleX(0.9300);transform-origin:0 0;">0</div>
<div class="t" style="left:839.55px;top:544.00px;font-size:11.8px;color:#1e2226;transform:scaleX(0.9300);transform-origin:0 0;">6</div>
<div class="r" style="left:849.7px;top:543.45px;width:1.2px;height:9.6px;background:#8a939b;"></div>
<div class="t" style="left:892.72px;top:544.00px;font-size:11.8px;color:#1e2226;transform:scaleX(0.9300);transform-origin:0 0;">14</div>
<div class="r" style="left:908px;top:543.45px;width:1.2px;height:9.6px;background:#8a939b;"></div>
<div class="t" style="left:947.45px;top:544.00px;font-size:11.8px;color:#1e2226;transform:scaleX(0.9300);transform-origin:0 0;">6</div>
<div class="r" style="left:957px;top:543.45px;width:1.2px;height:9.6px;background:#8a939b;"></div>
<div class="t" style="left:1012.52px;top:543.00px;font-size:11.7px;color:#1e2226;">0</div>
<div class="t" style="left:460.20px;top:565.00px;font-size:11px;color:#2a88c0;">None</div>
<div class="t" style="left:567.70px;top:565.00px;font-size:11px;color:#2a88c0;">david.poster</div>
<div class="t" style="left:644.85px;top:565.00px;font-size:11.8px;color:#1e2226;transform:scaleX(0.9300);transform-origin:0 0;">259.6M</div>
<div class="r" style="left:686px;top:563.6px;width:1.2px;height:9.6px;background:#8a939b;"></div>
<div class="t" style="left:713.85px;top:565.00px;font-size:11.8px;color:#1e2226;transform:scaleX(0.9300);transform-origin:0 0;">7.3k</div>
<div class="r" style="left:739px;top:563.6px;width:1.2px;height:9.6px;background:#8a939b;"></div>
<div class="t" style="left:773.05px;top:565.00px;font-size:11.8px;color:#1e2226;transform:scaleX(0.9300);transform-origin:0 0;">0</div>
<div class="t" style="left:824.85px;top:565.00px;font-size:11.8px;color:#1e2226;transform:scaleX(0.9300);transform-origin:0 0;">2.3k</div>
<div class="r" style="left:849.7px;top:563.6px;width:3px;height:9.6px;background:#76808a;"></div>
<div class="t" style="left:886.57px;top:565.00px;font-size:11.8px;color:#1e2226;transform:scaleX(0.9300);transform-origin:0 0;">802</div>
<div class="r" style="left:908px;top:563.6px;width:1.2px;height:9.6px;background:#8a939b;"></div>
<div class="t" style="left:947.45px;top:565.00px;font-size:11.8px;color:#1e2226;transform:scaleX(0.9300);transform-origin:0 0;">6</div>
<div class="r" style="left:957px;top:563.6px;width:1.2px;height:9.6px;background:#8a939b;"></div>
<div class="t" style="left:1012.52px;top:564.00px;font-size:11.7px;color:#1e2226;">0</div>
<div class="t" style="left:460.20px;top:585.00px;font-size:11px;color:#2a88c0;">steven.sharma</div>
<div class="t" style="left:567.70px;top:585.00px;font-size:11px;color:#2a88c0;">None</div>
<div class="t" style="left:644.85px;top:585.00px;font-size:11.8px;color:#1e2226;transform:scaleX(0.9300);transform-origin:0 0;">234.1M</div>
<div class="r" style="left:686px;top:583.75px;width:1.2px;height:9.6px;background:#8a939b;"></div>
<div class="t" style="left:716.37px;top:585.00px;font-size:11.8px;color:#1e2226;transform:scaleX(0.9300);transform-origin:0 0;">444</div>
<div class="r" style="left:739px;top:583.75px;width:1.2px;height:9.6px;background:#8a939b;"></div>
<div class="t" style="left:773.05px;top:585.00px;font-size:11.8px;color:#1e2226;transform:scaleX(0.9300);transform-origin:0 0;">0</div>
<div class="t" style="left:839.55px;top:585.00px;font-size:11.8px;color:#1e2226;transform:scaleX(0.9300);transform-origin:0 0;">4</div>
<div class="r" style="left:849.7px;top:583.75px;width:1.2px;height:9.6px;background:#8a939b;"></div>
<div class="t" style="left:886.57px;top:585.00px;font-size:11.8px;color:#1e2226;transform:scaleX(0.9300);transform-origin:0 0;">236</div>
<div class="r" style="left:908px;top:583.75px;width:1.2px;height:9.6px;background:#8a939b;"></div>
<div class="t" style="left:947.45px;top:585.00px;font-size:11.8px;color:#1e2226;transform:scaleX(0.9300);transform-origin:0 0;">9</div>
<div class="r" style="left:957px;top:583.75px;width:1.2px;height:9.6px;background:#8a939b;"></div>
<div class="t" style="left:1012.52px;top:584.00px;font-size:11.7px;color:#1e2226;">0</div>
</div></body></html>
